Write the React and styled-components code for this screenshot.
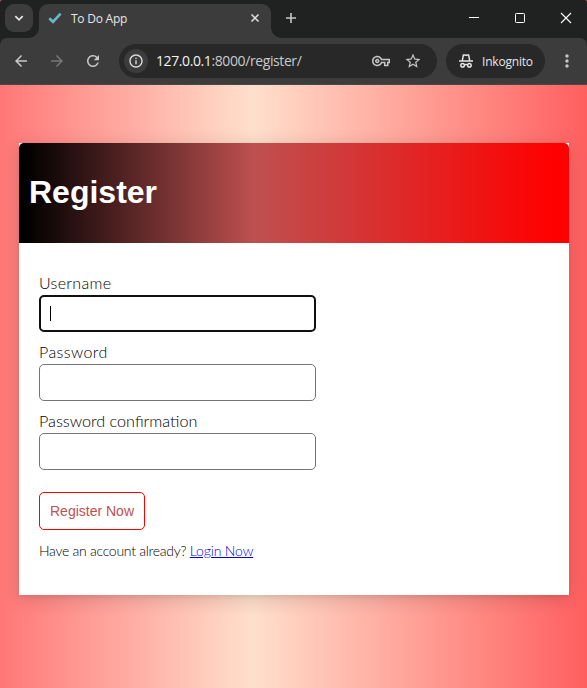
import React from "react";
import styled, { createGlobalStyle } from "styled-components";
import { MdArrowBack, MdArrowForward, MdRefresh, MdInfoOutline, MdOutlineVpnKey, MdStarBorder, MdMoreVert } from "react-icons/md";

const Global = createGlobalStyle`
  * { box-sizing: border-box; }
  html, body { margin: 0; height: 100%; overflow: hidden; }
`;

const Window = styled.div`
  width: 587px;
  height: 688px;
  display: flex;
  flex-direction: column;
  background: linear-gradient(to right, #ff7777 0%, #ffdfcc 43%, #ff5f5f 100%);
`;

const Chrome = styled.header`
  flex: none;
  height: 85px;
  background: #202221;
  border-radius: 2px 2px 0 0;
  font-family: "Open Sans", sans-serif;
`;

const TabStrip = styled.div`
  height: 38px;
  display: flex;
  align-items: flex-start;
  padding: 4px 0 0 5px;
`;

const TabSearch = styled.button`
  width: 28px;
  height: 28px;
  padding: 0;
  border: 0;
  border-radius: 9px;
  background: #3c3c3c;
  display: grid;
  place-items: center;
`;

const Tab = styled.div`
  position: relative;
  width: 232px;
  height: 34px;
  margin-left: 6px;
  padding: 0 10px 6px 9px;
  border-radius: 9px 9px 0 0;
  background: #3c3c3c;
  display: flex;
  align-items: center;
  &::before, &::after {
    content: "";
    position: absolute;
    bottom: 0;
    width: 10px;
    height: 10px;
  }
  &::before {
    left: -10px;
    background: radial-gradient(circle at 0 0, transparent 9.5px, #3c3c3c 10px);
  }
  &::after {
    right: -10px;
    background: radial-gradient(circle at 100% 0, transparent 9.5px, #3c3c3c 10px);
  }
`;

const TabTitle = styled.span`
  flex: 1;
  margin: 2px 0 0 9px;
  color: #e6e6e6;
  font-size: 12px;
  line-height: 16px;
  letter-spacing: -0.24px;
  white-space: nowrap;
`;

const Glyph = styled.svg`
  display: block;
  flex: none;
  fill: none;
  stroke: ${(p) => p.$color || "#e3e3e3"};
  stroke-width: ${(p) => p.$weight || 1.6};
`;

const NewTab = styled.div`
  margin: 8px 0 0 14px;
`;

const WindowControls = styled.div`
  margin: 8px 15px 0 auto;
  display: flex;
  gap: 34px;
`;

const Toolbar = styled.div`
  height: 47px;
  padding: 0 10px 0 12px;
  background: #3c3c3c;
  border-radius: 7px 7px 0 0;
  border-bottom: 1px solid #484848;
  display: flex;
  align-items: center;
`;

const NavIcon = styled.span`
  display: grid;
  place-items: center;
  width: 18px;
  height: 18px;
  margin-right: 18px;
  font-size: 18px;
  color: ${(p) => (p.$disabled ? "#777777" : "#c7c7c7")};
`;

const AddressBar = styled.div`
  flex: none;
  width: 318px;
  height: 34px;
  margin-left: -1px;
  padding: 0 15px 0 5px;
  border-radius: 17px;
  background: #282828;
  display: flex;
  align-items: center;
  color: #c7c7c7;
`;

const SiteInfo = styled.span`
  width: 24px;
  height: 24px;
  border-radius: 50%;
  background: #3c3c3c;
  display: grid;
  place-items: center;
  font-size: 16px;
  color: #e0e0e0;
`;

const Url = styled.span`
  flex: 1;
  margin-left: 8px;
  font-size: 14px;
  line-height: 20px;
  letter-spacing: -0.4px;
  color: #c9cacb;
  white-space: nowrap;
`;

const Host = styled.span`
  color: #f2f2f2;
`;

const BarIcon = styled.span`
  display: flex;
  margin-left: 14px;
  font-size: 18px;
`;

const Incognito = styled.div`
  flex: none;
  width: 99px;
  height: 34px;
  margin-left: 9px;
  padding-left: 12px;
  border-radius: 17px;
  background: #282828;
  color: #e6e6e6;
  font-size: 12px;
  letter-spacing: -0.2px;
  display: flex;
  align-items: center;
  gap: 8px;
`;

const MenuIcon = styled.span`
  display: flex;
  margin-left: 12px;
  font-size: 20px;
  color: #c7c7c7;
`;

const Page = styled.main`
  flex: 1;
  padding: 58px 18px 0 19px;
`;

const Card = styled.section`
  height: 452px;
  background: #fff;
  box-shadow: 0 2px 4px 0 rgba(0, 0, 0, 0.06), 0 4px 18px 0 rgba(0, 0, 0, 0.15);
`;

const CardHeader = styled.div`
  height: 100px;
  padding: 0 10px 2px;
  border-radius: 5px 5px 0 0;
  background: linear-gradient(to right, #000 1%, #bf5050 43%, #f00 97%);
  display: flex;
  align-items: center;
`;

const Title = styled.h1`
  margin: 0;
  color: #fff;
  font: bold 32px/37px "Liberation Sans", Arial, sans-serif;
`;

const Form = styled.form`
  padding: 29px 20px 0;
  display: flex;
  flex-direction: column;
  align-items: flex-start;
  font-family: Lato, sans-serif;
  font-weight: 300;
  color: #000;
`;

const Field = styled.label`
  display: flex;
  flex-direction: column;
  gap: 2px;
  height: 69px;
  font-size: ${(p) => p.$size || "16px"};
  line-height: 21px;
  letter-spacing: ${(p) => p.$spacing || "normal"};
`;

const Input = styled.div`
  width: 277px;
  height: 37px;
  padding: ${(p) => (p.$focused ? "9px" : "10px")};
  border: ${(p) => (p.$focused ? "2px solid #101010" : "1px solid #767676")};
  border-radius: 5px;
  background: #fff;
`;

const Caret = styled.span`
  display: block;
  width: 1px;
  height: 15px;
  background: #000;
`;

const Submit = styled.button`
  width: 106px;
  height: 38px;
  margin-top: 13px;
  padding: 0;
  border: 1px solid #f00;
  border-radius: 5px;
  background: #fff;
  color: #bf5050;
  font: 14px/16px "Liberation Sans", Arial, sans-serif;
  white-space: nowrap;
`;

const Hint = styled.p`
  margin: 11px 0 0;
  font-size: 14px;
  line-height: 20px;
  letter-spacing: -0.28px;
  white-space: nowrap;
`;

const Link = styled.a`
  color: #0000ee;
  letter-spacing: -0.14px;
  text-decoration: underline;
`;

const fields = [
  { label: "Username", focused: true, spacing: "0.32px" },
  { label: "Password", spacing: "0.4px" },
  { label: "Password confirmation", size: "16.2px" },
];

export default function App() {
  return (
    <Window>
      <Global />
      <Chrome>
        <TabStrip>
          <TabSearch aria-label="Search tabs">
            <Glyph width="10" height="10" viewBox="0 0 10 10" $weight={1.8}>
              <path d="M1.3 3.2 5 6.8 8.7 3.2" />
            </Glyph>
          </TabSearch>
          <Tab>
            <Glyph width="14" height="14" viewBox="0 0 14 14" $color="#67b9c6" $weight={2.6}>
              <path d="M1.3 7.3 5 10.8 12.6 2.6" />
            </Glyph>
            <TabTitle>To Do App</TabTitle>
            <Glyph width="12" height="12" viewBox="0 0 12 12" $weight={1.5}>
              <path d="M2.5 2.5 9.5 9.5M9.5 2.5 2.5 9.5" />
            </Glyph>
          </Tab>
          <NewTab>
            <Glyph width="12" height="12" viewBox="0 0 12 12" $color="#c7c7c7">
              <path d="M6 1V11M1 6H11" />
            </Glyph>
          </NewTab>
          <WindowControls>
            <Glyph width="12" height="12" viewBox="0 0 12 12" $color="#fff" $weight={1}>
              <path d="M1 5.5H11" />
            </Glyph>
            <Glyph width="12" height="12" viewBox="0 0 12 12" $color="#fff" $weight={1}>
              <rect x="1.5" y="1.5" width="9" height="9" rx="0.8" />
            </Glyph>
            <Glyph width="12" height="12" viewBox="0 0 12 12" $color="#fff" $weight={1.1}>
              <path d="M1 1 11 11M11 1 1 11" />
            </Glyph>
          </WindowControls>
        </TabStrip>
        <Toolbar>
          <NavIcon><MdArrowBack /></NavIcon>
          <NavIcon $disabled><MdArrowForward /></NavIcon>
          <NavIcon><MdRefresh /></NavIcon>
          <AddressBar>
            <SiteInfo><MdInfoOutline /></SiteInfo>
            <Url><Host>127.0.0.1</Host>:8000/register/</Url>
            <BarIcon><MdOutlineVpnKey /></BarIcon>
            <BarIcon><MdStarBorder /></BarIcon>
          </AddressBar>
          <Incognito>
            <Glyph width="16" height="16" viewBox="0 0 16 16" $weight={1.5}>
              <path d="M1 8H15M4.3 7.7 5.4 2H7L8 2.4 9 2H10.6L11.7 7.7" />
              <circle cx="4.6" cy="12.2" r="1.8" />
              <circle cx="11.4" cy="12.2" r="1.8" />
              <path d="M6.3 11.8Q8 11 9.7 11.8" />
            </Glyph>
            Inkognito
          </Incognito>
          <MenuIcon><MdMoreVert /></MenuIcon>
        </Toolbar>
      </Chrome>
      <Page>
        <Card>
          <CardHeader>
            <Title>Register</Title>
          </CardHeader>
          <Form>
            {fields.map((f) => (
              <Field key={f.label} $spacing={f.spacing} $size={f.size}>
                {f.label}
                <Input $focused={f.focused}>{f.focused && <Caret />}</Input>
              </Field>
            ))}
            <Submit type="button">Register Now</Submit>
            <Hint>
              Have an account already? <Link>Login Now</Link>
            </Hint>
          </Form>
        </Card>
      </Page>
    </Window>
  );
}
